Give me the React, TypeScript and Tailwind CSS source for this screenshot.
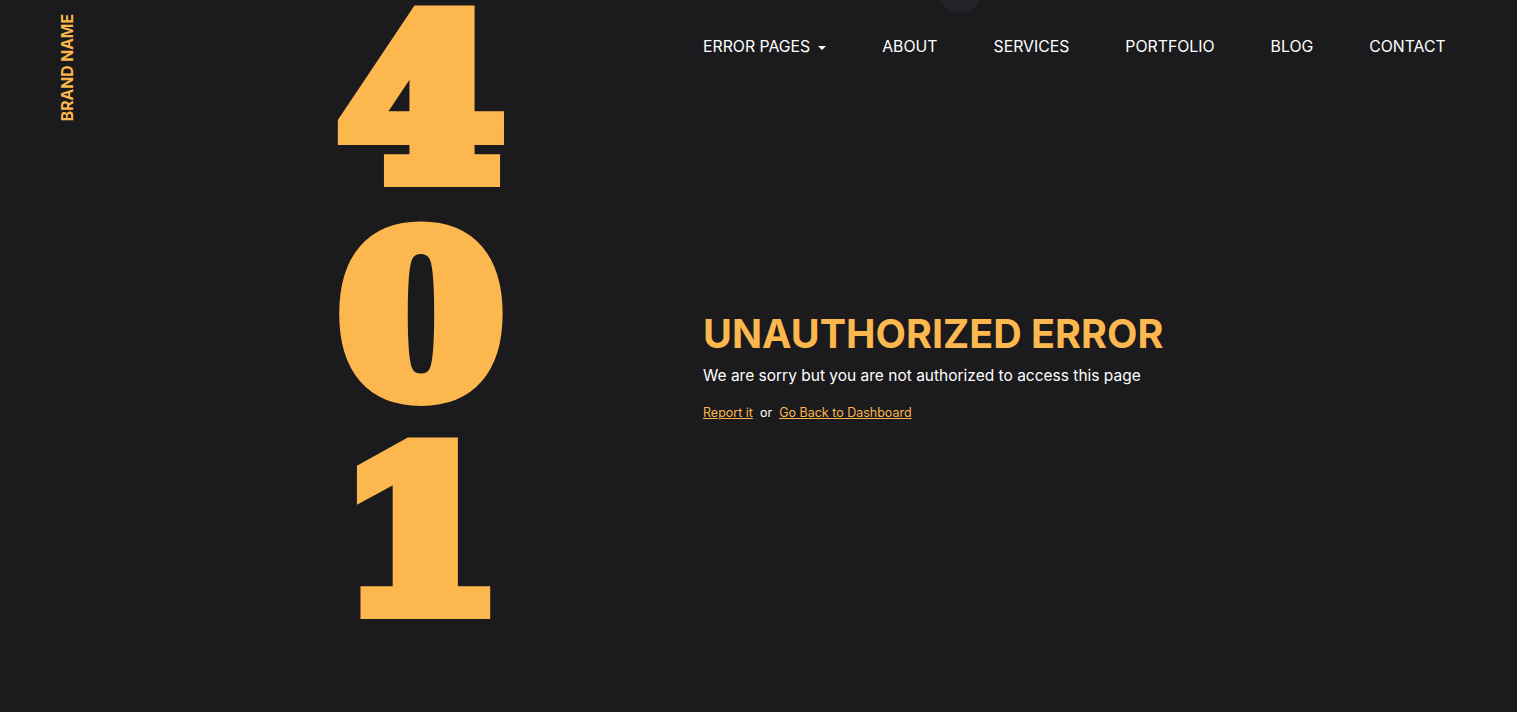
import React from "react";

export default function App() {
  const nav = ["ABOUT", "SERVICES", "PORTFOLIO", "BLOG", "CONTACT"];
  return (
    <div className="relative flex h-[712px] w-full overflow-hidden bg-[#1b1b1d] font-['Inter',sans-serif]">
      <div className="absolute left-[937px] top-[-32px] h-[45px] w-[45px] rounded-full bg-[#232327]" />
      <aside className="w-[339px] shrink-0">
        <div className="ml-[60px] mt-[14px] rotate-180 text-[15.7px] font-bold leading-[16px] text-[#fdb74f] [writing-mode:vertical-rl]">
          BRAND NAME
        </div>
      </aside>
      <div className="-mt-[8px] flex w-[364px] shrink-0 origin-left scale-x-[1.08] flex-col font-['DejaVu_Serif',serif] text-[218px] font-black leading-[216px] text-[#fdb74f] [-webkit-text-stroke:20px_#fdb74f] [paint-order:stroke_fill]">
        <span>4</span>
        <span>0</span>
        <span>1</span>
      </div>
      <div className="flex flex-1 flex-col">
        <nav className="mt-[37px] flex items-center gap-[56px] text-[15.8px] leading-[20px] text-white">
          <span className="flex items-center gap-[8px]">
            ERROR PAGES
            <span className="mt-[1px] h-0 w-0 border-x-[4px] border-t-[4px] border-x-transparent border-t-white" />
          </span>
          {nav.map((n) => (
            <span key={n}>{n}</span>
          ))}
        </nav>
        <div className="mt-[253px] flex flex-col">
          <h1 className="text-[39.5px] font-bold leading-[48px] text-[#fdb74f]">UNAUTHORIZED ERROR</h1>
          <p className="mt-[6px] text-[15.5px] leading-[24px] text-white">
            We are sorry but you are not authorized to access this page
          </p>
          <div className="mt-[17px] flex items-center gap-[7px] text-[12.5px] leading-[16px]">
            <a className="text-[#fdb74f] underline">Report it</a>
            <span className="text-white">or</span>
            <a className="text-[#fdb74f] underline">Go Back to Dashboard</a>
          </div>
        </div>
      </div>
    </div>
  );
}
